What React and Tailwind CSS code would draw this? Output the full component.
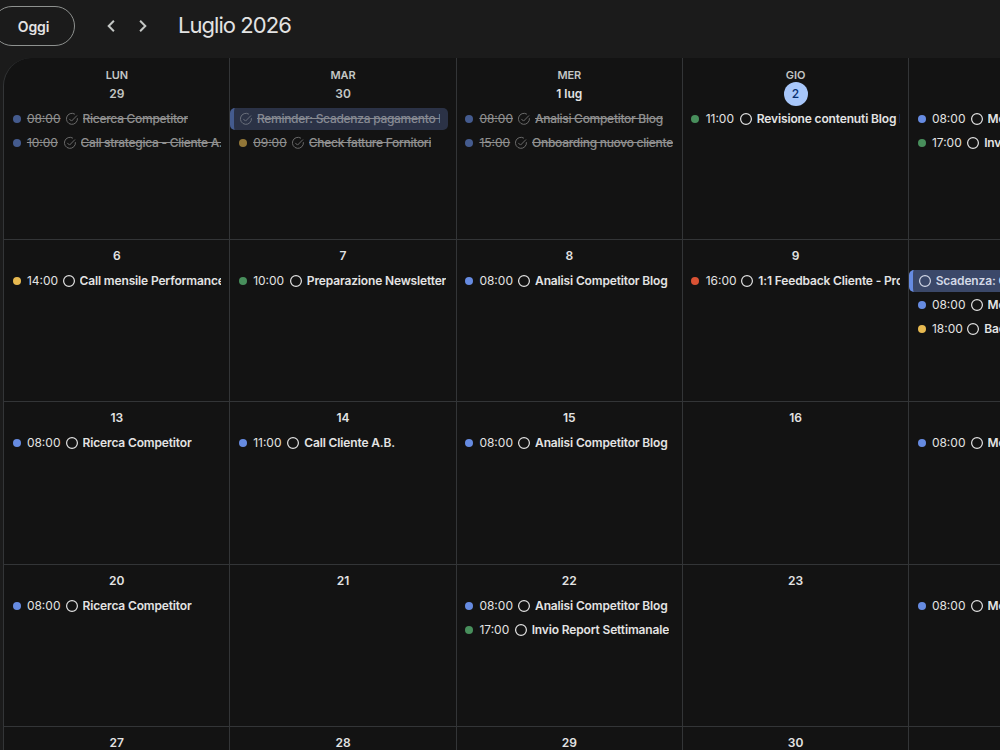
import React from 'react';

// --- Calendar data ---

const WEEKS = [
  {
    height: 'h-[182px]',
    days: [
      {
        name: 'LUN', label: '29', muted: true,
        events: [
          { time: '08:00', title: 'Ricerca Competitor', color: 'blue', done: true },
          { time: '10:00', title: 'Call strategica - Cliente A.B.', color: 'blue', done: true },
        ],
      },
      {
        name: 'MAR', label: '30', muted: true,
        events: [
          { title: 'Reminder: Scadenza pagamento IVA', color: 'blue', allDay: true, done: true },
          { time: '09:00', title: 'Check fatture Fornitori', color: 'yellow', done: true },
        ],
      },
      {
        name: 'MER', label: '1 lug',
        events: [
          { time: '08:00', title: 'Analisi Competitor Blog', color: 'blue', done: true },
          { time: '15:00', title: 'Onboarding nuovo cliente', color: 'blue', done: true },
        ],
      },
      {
        name: 'GIO', label: '2', today: true,
        events: [{ time: '11:00', title: 'Revisione contenuti Blog Post', color: 'green' }],
      },
      {
        name: 'VEN', label: '3',
        events: [
          { time: '08:00', title: 'Monitoraggio Ads', color: 'blue' },
          { time: '17:00', title: 'Invio Report Settimanale', color: 'green' },
        ],
      },
    ],
  },
  {
    height: 'h-[162px]',
    days: [
      { label: '6', events: [{ time: '14:00', title: 'Call mensile Performance', color: 'yellow' }] },
      { label: '7', events: [{ time: '10:00', title: 'Preparazione Newsletter', color: 'green' }] },
      { label: '8', events: [{ time: '08:00', title: 'Analisi Competitor Blog', color: 'blue' }] },
      { label: '9', events: [{ time: '16:00', title: '1:1 Feedback Cliente - Progetto', color: 'red' }] },
      {
        label: '10',
        events: [
          { title: 'Scadenza: Contratto', color: 'blue', allDay: true },
          { time: '08:00', title: 'Monitoraggio Ads', color: 'blue' },
          { time: '18:00', title: 'Backup settimanale', color: 'yellow' },
        ],
      },
    ],
  },
  {
    height: 'h-[163px]',
    days: [
      { label: '13', events: [{ time: '08:00', title: 'Ricerca Competitor', color: 'blue' }] },
      { label: '14', events: [{ time: '11:00', title: 'Call Cliente A.B.', color: 'blue' }] },
      { label: '15', events: [{ time: '08:00', title: 'Analisi Competitor Blog', color: 'blue' }] },
      { label: '16', events: [] },
      { label: '17', events: [{ time: '08:00', title: 'Monitoraggio Ads', color: 'blue' }] },
    ],
  },
  {
    height: 'h-[162px]',
    days: [
      { label: '20', events: [{ time: '08:00', title: 'Ricerca Competitor', color: 'blue' }] },
      { label: '21', events: [] },
      {
        label: '22',
        events: [
          { time: '08:00', title: 'Analisi Competitor Blog', color: 'blue' },
          { time: '17:00', title: 'Invio Report Settimanale', color: 'green' },
        ],
      },
      { label: '23', events: [] },
      { label: '24', events: [{ time: '08:00', title: 'Monitoraggio Ads', color: 'blue' }] },
    ],
  },
  {
    height: 'h-[162px]',
    days: [
      { label: '27', events: [] },
      { label: '28', events: [] },
      { label: '29', events: [] },
      { label: '30', events: [] },
      { label: '31', events: [] },
    ],
  },
];

const DOTS = {
  blue: 'bg-[#668be1]',
  green: 'bg-[#488f5c]',
  yellow: 'bg-[#e7b950]',
  red: 'bg-[#da5234]',
};

// The time column hugs its digits, so narrow ones pull the title left
const TIME_WIDTHS = {
  '08:00': 'w-[34px]',
  '09:00': 'w-[34px]',
  '10:00': 'w-[32px]',
  '11:00': 'w-[29.5px]',
  '14:00': 'w-[31px]',
  '15:00': 'w-[31px]',
  '16:00': 'w-[31px]',
  '17:00': 'w-[30.6px]',
  '18:00': 'w-[30.6px]',
};

// --- Small pieces ---

const TaskIcon = ({ done }) => (
  <svg viewBox="0 0 14 14" className={`w-3.5 h-3.5 shrink-0 ${done ? 'opacity-70' : ''}`} fill="none" stroke="currentColor" strokeWidth={done ? '1' : '1.2'}>
    {done ? (
      <>
        <path d="M9.9 2.2A5.5 5.5 0 1 0 12.4 6.2" />
        <path d="M4.3 6.9l2.2 2.2 5.5-5.6" />
      </>
    ) : (
      <circle cx="7" cy="7" r="5.4" />
    )}
  </svg>
);

const EventTitle = ({ title, done }) => (
  <span className={`overflow-hidden whitespace-nowrap ${done ? 'line-through font-medium tracking-[-0.28px]' : 'font-semibold tracking-[-0.15px]'}`}>
    {title}
  </span>
);

const EventRow = ({ time, title, color, allDay, done }) => {
  if (allDay) {
    return (
      <div className={`flex items-center h-[22px] mr-[7.5px] pr-2 rounded-[5px] border-l-4 border-[#668be1] bg-[#3b4869] text-[#d3d8e6] pl-[5px] gap-[3.5px] ${done ? 'opacity-60' : ''}`}>
        <TaskIcon done={done} />
        <EventTitle title={title} done={done} />
      </div>
    );
  }
  return (
    <div className={`flex items-center h-[22px] pl-[8.4px] pr-2 text-[#e3e3e3] ${done ? 'opacity-60' : ''}`}>
      <span className={`w-2 h-2 rounded-full shrink-0 ${DOTS[color]}`} />
      <span className={`ml-[6.3px] mr-[-0.3px] shrink-0 whitespace-nowrap ${TIME_WIDTHS[time]} ${done ? 'line-through' : ''}`}>{time}</span>
      <span className="ml-1 mr-1 flex shrink-0">
        <TaskIcon done={done} />
      </span>
      <EventTitle title={title} done={done} />
    </div>
  );
};

const DayCell = ({ name, label, muted, today, events }) => (
  <div className="border-l first:border-l-0 border-b border-[#333537] min-w-0 overflow-hidden">
    {name && <div className="h-6 pt-[9px] text-center text-[11px] leading-4 font-semibold tracking-[-0.1px] text-[#c4c7c5]">{name}</div>}
    <div className={`flex justify-center ${name ? '' : 'pt-1'}`}>
      <span className={`h-6 leading-6 text-center ${today ? 'w-6 rounded-full bg-[#a8c7fa] text-[#062e6f] font-medium' : muted ? 'text-[#c4c7c5] font-semibold' : 'text-[#e3e3e3] font-semibold'}`}>
        {label}
      </span>
    </div>
    <div className="mt-0.5 space-y-0.5">
      {events.map((event, idx) => (
        <EventRow key={idx} {...event} />
      ))}
    </div>
  </div>
);

const Chevron = ({ d }) => (
  <button className="w-8 h-8 flex items-center justify-center text-[#c4c7c5]">
    <svg viewBox="0 0 20 20" className="w-5 h-5" fill="none" stroke="currentColor" strokeWidth="2">
      <path d={d} />
    </svg>
  </button>
);

// --- Main view ---

const App = () => (
  <div className="w-full h-[750px] overflow-hidden bg-[#1b1b1b] text-[#e3e3e3] font-['Inter','Liberation_Sans',sans-serif] text-[12px]">
    <header className="h-[58px] flex items-start pt-1.5">
      <button className="-ml-2 w-[83px] h-10 rounded-full border border-[#8e918f] text-[14px] font-semibold tracking-[-0.1px] text-center">Oggi</button>
      <div className="flex ml-5 mt-1">
        <Chevron d="M12.9 4.8 7.7 10l5.2 5.2" />
        <Chevron d="M7.1 4.8 12.3 10l-5.2 5.2" />
      </div>
      <h1 className="ml-[19px] text-[22px] leading-[38px] tracking-[-0.95px]">Luglio 2026</h1>
    </header>

    <main className="ml-[3.2px] w-[1132px] rounded-tl-[28px] overflow-hidden bg-[#131313] border-l border-[#333537]">
      {WEEKS.map((week, idx) => (
        <div key={idx} className={`grid grid-cols-[225.25px_repeat(4,226.25px)] ${week.height}`}>
          {week.days.map((day) => (
            <DayCell key={day.label} {...day} />
          ))}
        </div>
      ))}
    </main>
  </div>
);

export default App;
